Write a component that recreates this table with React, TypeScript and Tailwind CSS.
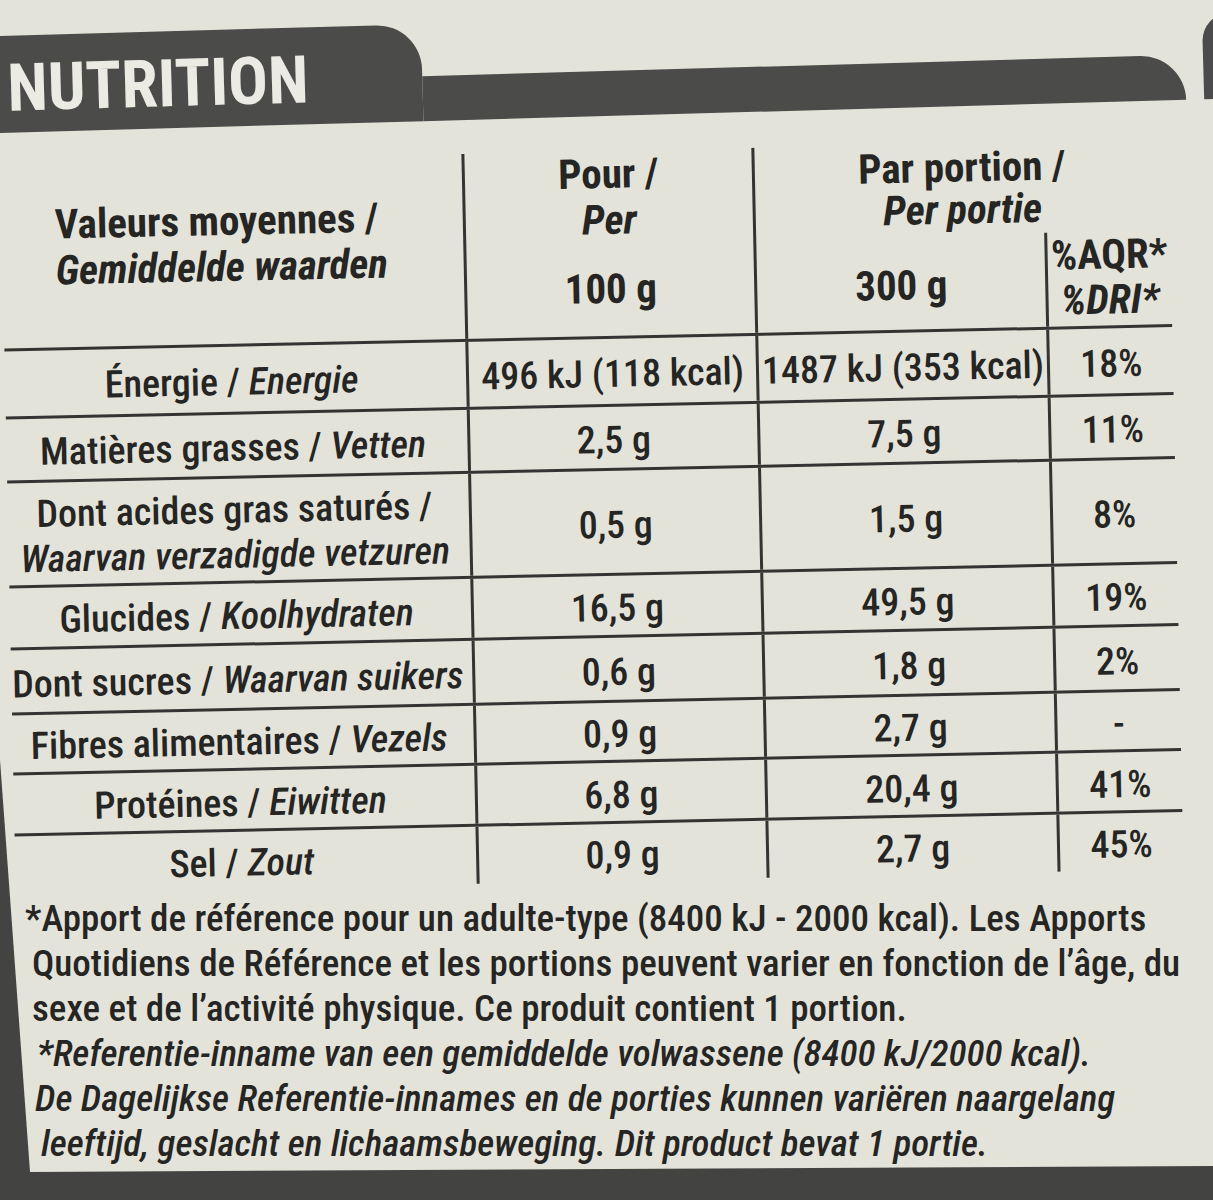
type Row = {
  fr: string;
  nl: string;
  per100: string;
  portion: string;
  dri: string;
  h: string;
};

const rows: Row[] = [
  { fr: "Énergie", nl: "Energie", per100: "496 kJ (118 kcal)", portion: "1487 kJ (353 kcal)", dri: "18%", h: "h-[68px]" },
  { fr: "Matières grasses", nl: "Vetten", per100: "2,5 g", portion: "7,5 g", dri: "11%", h: "h-[64px]" },
  { fr: "Dont acides gras saturés", nl: "Waarvan verzadigde vetzuren", per100: "0,5 g", portion: "1,5 g", dri: "8%", h: "h-[105px]" },
  { fr: "Glucides", nl: "Koolhydraten", per100: "16,5 g", portion: "49,5 g", dri: "19%", h: "h-[62px]" },
  { fr: "Dont sucres", nl: "Waarvan suikers", per100: "0,6 g", portion: "1,8 g", dri: "2%", h: "h-[65px]" },
  { fr: "Fibres alimentaires", nl: "Vezels", per100: "0,9 g", portion: "2,7 g", dri: "-", h: "h-[60px]" },
  { fr: "Protéines", nl: "Eiwitten", per100: "6,8 g", portion: "20,4 g", dri: "41%", h: "h-[61px]" },
  { fr: "Sel", nl: "Zout", per100: "0,9 g", portion: "2,7 g", dri: "45%", h: "h-[57px]" },
];

// footnote lines, each with its own left offset (the label edge drifts right)
const notes = [
  { text: "*Apport de référence pour un adulte-type (8400 kJ - 2000 kcal). Les Apports", ml: "ml-[25px]", italic: false },
  { text: "Quotidiens de Référence et les portions peuvent varier en fonction de l’âge, du", ml: "ml-[32px]", italic: false },
  { text: "sexe et de l’activité physique. Ce produit contient 1 portion.", ml: "ml-[32px]", italic: false },
  { text: "*Referentie-inname van een gemiddelde volwassene (8400 kJ/2000 kcal).", ml: "ml-[37px]", italic: true },
  { text: "De Dagelijkse Referentie-innames en de porties kunnen variëren naargelang", ml: "ml-[35px]", italic: true },
  { text: "leeftijd, geslacht en lichaamsbeweging. Dit product bevat 1 portie.", ml: "ml-[41px]", italic: true },
];

function Header() {
  return (
    <div className="flex h-[130px] items-end pb-[14px] rotate-[-1.6deg]">
      <div className="-ml-[30px] flex h-[97px] w-[452px] shrink-0 items-end rounded-tr-[45px] bg-[#4b4b4a] pb-[11px] pl-[37px]">
        <span className="text-[66px] font-bold leading-none text-[#ecebe3]">NUTRITION</span>
      </div>
      <div className="h-[45px] w-[763px] shrink-0 rounded-tr-[50px] bg-[#4b4b4a]" />
      <div className="ml-[18px] h-[86px] w-[60px] shrink-0 rounded-tl-[28px] bg-[#4b4b4a]" />
    </div>
  );
}

function TableHead() {
  return (
    <div className="grid h-[188px] grid-cols-[461px_290px_417px] border-b-[3px] border-[#343432] text-[41px] font-bold leading-[46px]">
      <div className="pl-[53px] pt-[39px]">
        <div>Valeurs moyennes /</div>
        <div className="italic">Gemiddelde waarden</div>
      </div>
      <div className="flex flex-col items-center border-l-[3px] border-[#343432]">
        <div>Pour /</div>
        <div className="italic">Per</div>
        <div className="mt-[23px]">100 g</div>
      </div>
      <div className="flex flex-col border-l-[3px] border-[#343432]">
        <div className="pt-[3px] text-center leading-[42px]">
          <div>Par portion /</div>
          <div className="italic">Per portie</div>
        </div>
        <div className="mt-[4px] grid flex-1 grid-cols-[288px_126px]">
          <div className="pt-[27px] text-center">300 g</div>
          <div className="border-l-[3px] border-[#343432] pt-[1px] text-center leading-[45px]">
            <div>%AQR*</div>
            <div className="italic">%DRI*</div>
          </div>
        </div>
      </div>
    </div>
  );
}

function NutrientRow({ row, last }: { row: Row; last: boolean }) {
  const cell = "flex items-center justify-center border-l-[3px] border-[#343432] pt-[6px]";
  return (
    <div
      className={`grid grid-cols-[461px_290px_291px_126px] border-[#343432] text-[38px] font-medium leading-[45px] ${row.h} ${
        last ? "" : "border-b-[3px]"
      }`}
    >
      <div className="flex items-center justify-center whitespace-nowrap pr-[8px] pt-[6px] text-center">
        {row.fr === "Dont acides gras saturés" ? (
          <div>
            <div>{row.fr} /</div>
            <div className="italic">{row.nl}</div>
          </div>
        ) : (
          <span>
            {row.fr} / <span className="italic">{row.nl}</span>
          </span>
        )}
      </div>
      <div className={`${cell} whitespace-nowrap`}>{row.per100}</div>
      <div className={`${cell} whitespace-nowrap`}>{row.portion}</div>
      <div className={cell}>{row.dri}</div>
    </div>
  );
}

export default function App() {
  return (
    <div className="h-[1200px] w-full overflow-hidden bg-[#434342] text-[#252523] [font-family:Roboto,sans-serif] [font-stretch:condensed]">
      <div className="h-[1200px] bg-[#e3e3d9] [clip-path:polygon(0_0,100%_0,100%_1166px,30px_1172px,0_760px)]">
        <Header />

        {/* Table */}
        <div className="mt-[21px] h-[730px] pl-[8px] rotate-[-1.2deg]">
          <div className="w-[1168px]">
            <TableHead />
            {rows.map((row, i) => (
              <NutrientRow key={row.fr} row={row} last={i === rows.length - 1} />
            ))}
          </div>
        </div>

        {/* Footnote */}
        <div className="pt-[15px] text-[37px] font-medium leading-[45px]">
          {notes.map((n) => (
            <div key={n.text} className={`${n.ml} whitespace-nowrap ${n.italic ? "italic" : ""}`}>
              {n.text}
            </div>
          ))}
        </div>
      </div>
    </div>
  );
}
